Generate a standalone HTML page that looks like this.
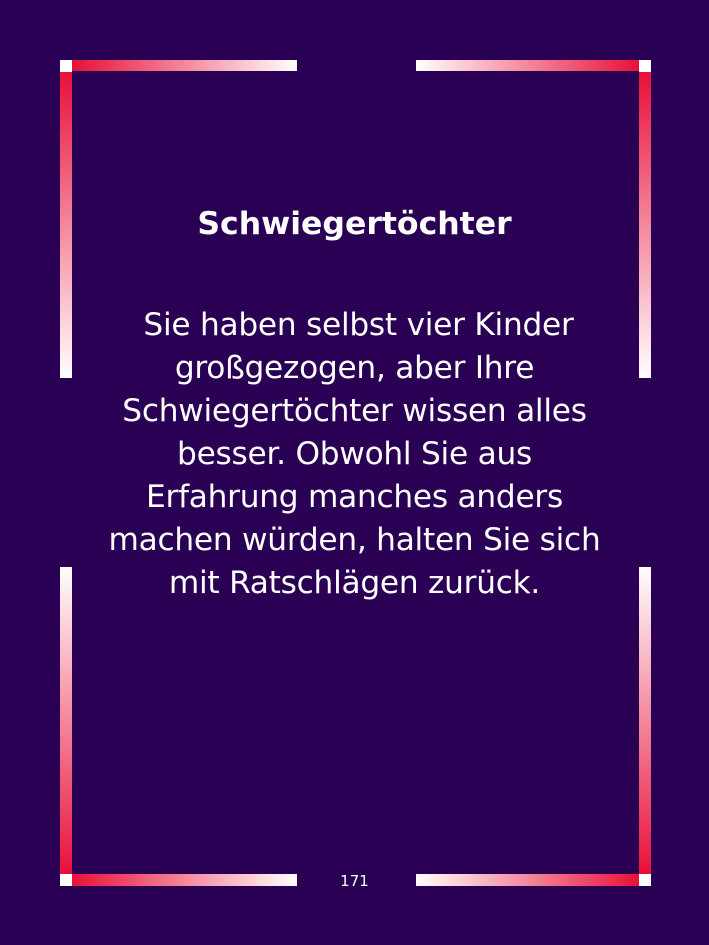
<!DOCTYPE html>
<html><head><meta charset="utf-8"><style>
html,body{margin:0;padding:0}
body{width:709px;height:945px;background:#2a0055;position:relative;overflow:hidden;font-family:"DejaVu Sans","Liberation Sans",sans-serif;color:#fff}
.b{position:absolute}
.sq{background:#fff;width:12px;height:12px}
.t{position:absolute;left:0;width:709px;text-align:center;white-space:nowrap}
.l{font-size:31.2px;line-height:43px;letter-spacing:-0.25px}
</style></head><body>
<div class="b sq" style="left:60px;top:60px"></div>
<div class="b sq" style="left:639px;top:60px"></div>
<div class="b sq" style="left:60px;top:874px"></div>
<div class="b sq" style="left:639px;top:874px"></div>
<div class="b" style="left:72px;top:60px;width:225px;height:11px;background:linear-gradient(to right,#e8103a,#fff)"></div>
<div class="b" style="left:416px;top:60px;width:223px;height:11px;background:linear-gradient(to left,#e8103a,#fff)"></div>
<div class="b" style="left:72px;top:874px;width:225px;height:12px;background:linear-gradient(to right,#e8103a,#fff)"></div>
<div class="b" style="left:416px;top:874px;width:223px;height:12px;background:linear-gradient(to left,#e8103a,#fff)"></div>
<div class="b" style="left:60px;top:72px;width:12px;height:306px;background:linear-gradient(to bottom,#e8103a,#fff)"></div>
<div class="b" style="left:639px;top:72px;width:12px;height:306px;background:linear-gradient(to bottom,#e8103a,#fff)"></div>
<div class="b" style="left:60px;top:567px;width:12px;height:307px;background:linear-gradient(to top,#e8103a,#fff)"></div>
<div class="b" style="left:639px;top:567px;width:12px;height:307px;background:linear-gradient(to top,#e8103a,#fff)"></div>
<div class="t" style="top:203px;font-size:31.5px;font-weight:bold;line-height:42px;left:0px;letter-spacing:0px">Schwiegertöchter</div>
<div class="t l" style="top:304px;left:4px">Sie haben selbst vier Kinder</div>
<div class="t l" style="top:347px">großgezogen, aber Ihre</div>
<div class="t l" style="top:390px">Schwiegertöchter wissen alles</div>
<div class="t l" style="top:433px">besser. Obwohl Sie aus</div>
<div class="t l" style="top:476px">Erfahrung manches anders</div>
<div class="t l" style="top:519px">machen würden, halten Sie sich</div>
<div class="t l" style="top:562px">mit Ratschlägen zurück.</div>
<div class="t" style="top:871px;font-size:15px;line-height:20px">171</div>
</body></html>
